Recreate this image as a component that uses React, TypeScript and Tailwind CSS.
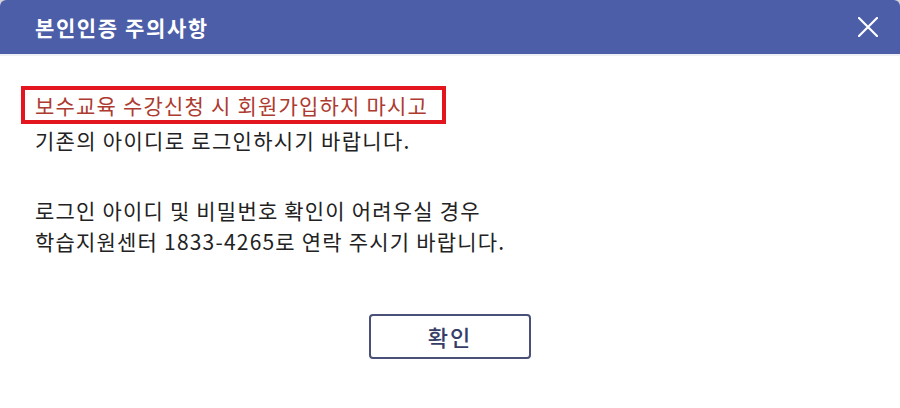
import React from "react";

export default function App() {
  return (
    <div
      className="w-[900px] h-[408px] bg-[#d4d4d4] overflow-hidden"
      style={{ fontFamily: '"Noto Sans CJK KR", "Noto Sans", sans-serif' }}
    >
      <div className="w-full h-full bg-white rounded-t-[6px] overflow-hidden flex flex-col">
        <div className="h-[56px] bg-[#4c5ea8] flex items-center justify-between pl-[35px] pr-[20px] border-b-2 border-[#eef0f6]">
          <h1 className="text-white text-[21px] font-bold leading-none tracking-[1.6px]">본인인증 주의사항</h1>
          <button className="w-[24px] h-[24px] flex items-center justify-center" aria-label="닫기">
            <svg width="20" height="20" viewBox="0 0 20 20" fill="none">
              <path d="M1 1 L19 19 M19 1 L1 19" stroke="white" strokeWidth="2.2" strokeLinecap="round" />
            </svg>
          </button>
        </div>
        <div className="flex-1 flex flex-col pt-[30px]">
          <div className="ml-[21px] w-[425px] h-[38px] border-4 border-[#e3151f] pl-[10px] flex items-center">
            <span className="text-[#ad3b2f] text-[21px] leading-[30px] tracking-[1.2px] whitespace-nowrap">
              보수교육 수강신청 시 회원가입하지 마시고
            </span>
          </div>
          <p className="pl-[35px] text-[#222222] text-[21px] leading-[33px] tracking-[1.3px]">기존의 아이디로 로그인하시기 바랍니다.</p>
          <div className="pl-[35px] mt-[38px] text-[#222222] text-[21px] leading-[31px] tracking-[1.2px]">
            <p>로그인 아이디 및 비밀번호 확인이 어려우실 경우</p>
            <p>학습지원센터 1833-4265로 연락 주시기 바랍니다.</p>
          </div>
          <div className="flex justify-center mt-[57px]">
            <button className="w-[162px] h-[45px] border-2 border-[#4a5178] rounded-[4px] text-[#363d66] text-[22px] font-medium tracking-[2px]">
              확인
            </button>
          </div>
        </div>
      </div>
    </div>
  );
}
